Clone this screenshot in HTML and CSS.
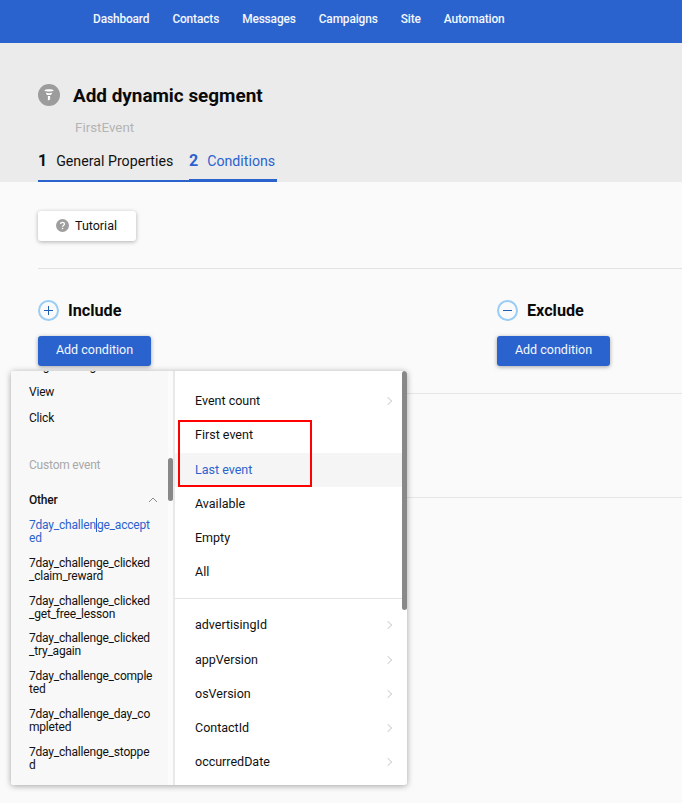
FILE: index.html
```html
<!DOCTYPE html>
<html lang="en">
<head>
  <meta charset="UTF-8" />
  <title>Add dynamic segment</title>
  <link rel="stylesheet" href="styles.css">
</head>
<body>
  <nav class="topbar">
    <a>Dashboard</a>
    <a>Contacts</a>
    <a>Messages</a>
    <a>Campaigns</a>
    <a>Site</a>
    <a>Automation</a>
  </nav>

  <header class="page-head">
    <div class="title-row">
      <span class="title-icon">
        <svg width="10" height="12" viewBox="0 0 10 12"><path d="M0.3 1.4C2 0 8 0 9.7 1.4 8 2.8 2 2.8 0.3 1.4z" fill="#fff"/><path d="M1.6 3.6c2 .7 4.8 .7 6.8 0L7 6H3z" fill="#fff"/><path d="M3.9 7h2.2v3.4l-2.2 1z" fill="#fff"/></svg>
      </span>
      <h1>Add dynamic segment</h1>
    </div>
    <p class="subtitle">FirstEvent</p>
    <div class="steps">
      <div class="step done"><b>1</b><span>General Properties</span></div>
      <div class="step active"><b>2</b><span>Conditions</span></div>
    </div>
  </header>

  <main class="content">
    <button class="tutorial-btn">
      <svg width="13" height="13" viewBox="0 0 13 13"><circle cx="6.5" cy="6.5" r="6.5" fill="#9e9e9e"/><path d="M4.6 5.1c0-1 .8-1.7 1.9-1.7s1.9.7 1.9 1.6c0 1.4-1.9 1.4-1.9 2.8" fill="none" stroke="#fff" stroke-width="1.3"/><rect x="5.8" y="8.8" width="1.4" height="1.4" fill="#fff"/></svg>
      Tutorial
    </button>

    <div class="conditions">
      <section class="cond-col">
        <div class="cond-head">
          <span class="round-icon"><svg width="9" height="9" viewBox="0 0 9 9"><path d="M4.5 0v9M0 4.5h9" stroke="#1d5fb5" stroke-width="1"/></svg></span>
          <h2>Include</h2>
        </div>
        <button class="add-btn">Add condition</button>
      </section>
      <section class="cond-col">
        <div class="cond-head">
          <span class="round-icon"><svg width="9" height="9" viewBox="0 0 9 9"><path d="M0 4.5h9" stroke="#1d5fb5" stroke-width="1"/></svg></span>
          <h2>Exclude</h2>
        </div>
        <button class="add-btn">Add condition</button>
      </section>
    </div>
    <div class="row-line first"></div>
    <div class="row-line second"></div>
  </main>

  <div class="menu">
    <div class="menu-left">
      <ul class="events">
        <li class="clipped">Page loading</li>
        <li class="plain">View</li>
        <li class="plain">Click</li>
        <li class="group-label">Custom event</li>
        <li class="group-head">Other
          <svg width="10" height="6" viewBox="0 0 10 6"><path d="M1 5l4-4 4 4" fill="none" stroke="#8a8a8a"/></svg>
        </li>
        <li class="event current">7day_challen<i class="caret"></i>ge_accept<br>ed</li>
        <li class="event">7day_challenge_clicked<br>_claim_reward</li>
        <li class="event">7day_challenge_clicked<br>_get_free_lesson</li>
        <li class="event">7day_challenge_clicked<br>_try_again</li>
        <li class="event">7day_challenge_comple<br>ted</li>
        <li class="event">7day_challenge_day_co<br>mpleted</li>
        <li class="event">7day_challenge_stoppe<br>d</li>
      </ul>
      <div class="scroll left-thumb"></div>
    </div>
    <div class="menu-right">
      <ul class="ops">
        <li class="arrow">Event count</li>
        <li>First event</li>
        <li class="hover">Last event</li>
        <li>Available</li>
        <li>Empty</li>
        <li>All</li>
      </ul>
      <ul class="ops attrs">
        <li class="arrow">advertisingId</li>
        <li class="arrow">appVersion</li>
        <li class="arrow">osVersion</li>
        <li class="arrow">ContactId</li>
        <li class="arrow">occurredDate</li>
      </ul>
      <div class="scroll right-thumb"></div>
    </div>
  </div>
  <div class="red-box"></div>
</body>
</html>
```

FILE: styles.css
```css
* {
  box-sizing: border-box;
}

body {
  margin: 0;
  height: 803px;
  overflow: hidden;
  position: relative;
  font-family: Roboto, "Liberation Sans", sans-serif;
  background: #fafafa;
  color: #111;
}

.topbar {
  height: 43px;
  background: #2b63ce;
  padding: 12px 0 0 93px;
  display: flex;
  gap: 23px;
  font-size: 11.9px;
  font-weight: 500;
  letter-spacing: -0.13px;
  line-height: 14px;
  color: #f4f7fd;
}

.page-head {
  height: 139px;
  background: #ebebeb;
  padding: 40px 0 0 38px;
}

.title-row {
  display: flex;
  align-items: center;
  gap: 13px;
  height: 24px;
}

.title-icon {
  width: 22px;
  height: 22px;
  border-radius: 50%;
  background: #9c9c9c;
  display: flex;
  align-items: center;
  justify-content: center;
}

h1 {
  margin: 0;
  font-size: 18.9px;
  font-weight: 700;
  color: #0a0a0a;
}

.subtitle {
  margin: 13px 0 0 37px;
  font-size: 13.4px;
  line-height: 16px;
  color: #b4b4b4;
}

.steps {
  display: flex;
  margin-top: 15px;
}

.step {
  height: 31px;
  display: flex;
  align-items: flex-start;
  gap: 9px;
  font-size: 14.2px;
  line-height: 20px;
  border-bottom: 2px solid #2b63ce;
}

.step b {
  font-size: 16px;
  font-weight: 700;
}

.step.done {
  width: 151px;
}

.step.active {
  width: 88px;
  border-bottom-width: 3px;
  color: #2b63ce;
}

.content {
  padding: 29px 0 0 38px;
  position: relative;
}

.tutorial-btn {
  width: 98px;
  height: 30px;
  border: none;
  border-radius: 3px;
  background: #fff;
  box-shadow: 0 1px 4px rgba(0, 0, 0, 0.3);
  display: flex;
  align-items: center;
  gap: 6px;
  padding: 0 0 2px 18px;
  font: 12.5px Roboto, sans-serif;
  color: #111;
}

.conditions {
  display: grid;
  grid-template-columns: 459px 1fr;
  margin-top: 27px;
  border-top: 1px solid #e2e2e2;
  padding-top: 30px;
}

.cond-head {
  display: flex;
  align-items: center;
  gap: 9px;
  height: 22px;
}

.round-icon {
  width: 21px;
  height: 21px;
  border: 2px solid #9acdf5;
  border-radius: 50%;
  display: flex;
  align-items: center;
  justify-content: center;
}

h2 {
  margin: 0;
  font-size: 16.2px;
  font-weight: 700;
  color: #0a0a0a;
}

.add-btn {
  display: block;
  margin-top: 15px;
  width: 113px;
  height: 30px;
  border: none;
  border-radius: 3px;
  background: #2b63ce;
  box-shadow: 0 1px 4px rgba(0, 0, 0, 0.35);
  padding: 0 0 4px;
  font: 12.5px Roboto, sans-serif;
  color: #f4f7fd;
}

.row-line {
  height: 1px;
  background: #e6e6e6;
}

.row-line.first {
  margin-top: 27px;
}

.row-line.second {
  margin-top: 103px;
}

/* dropdown over the page */
.menu {
  position: absolute;
  left: 11px;
  top: 371px;
  width: 396px;
  height: 414px;
  display: flex;
  background: #fff;
  border-radius: 3px;
  box-shadow: 0 1px 6px rgba(0, 0, 0, 0.35);
  overflow: hidden;
}

.menu-left {
  width: 163px;
  position: relative;
  background: #fbfbfb;
  border-right: 1px solid #e8e8e8;
  overflow: hidden;
}

.events {
  list-style: none;
  width: 157px;
  min-height: 430px;
  margin: -12px 0 0;
  padding: 0 0 0 18px;
  background: #f8f8f8;
  font-size: 12px;
  letter-spacing: -0.2px;
}

.events .clipped {
  line-height: 14px;
}

.events .plain {
  line-height: 14px;
  margin-top: 12px;
}

.events .group-label {
  line-height: 14px;
  margin-top: 33px;
  color: #a8a8a8;
}

.events .group-head {
  line-height: 14px;
  margin-top: 21px;
  width: 129px;
  display: flex;
  align-items: center;
  justify-content: space-between;
  font-weight: 500;
}

.event {
  line-height: 13px;
  margin-top: 12px;
  height: 25.8px;
  white-space: nowrap;
}

.event.current {
  margin-top: 11px;
  height: 26.8px;
  color: #2b63ce;
}

.caret {
  display: inline-block;
  width: 1px;
  height: 14px;
  margin-bottom: -3px;
  background: #2b63ce;
}

.scroll {
  position: absolute;
  width: 5px;
  border-radius: 3px;
  background: #888;
}

.left-thumb {
  right: 0;
  top: 87px;
  height: 43px;
}

.menu-right {
  flex: 1;
  position: relative;
  border-left: 1px solid #e8e8e8;
}

.ops {
  list-style: none;
  margin: 0;
  padding: 13.2px 0 9px;
  font-size: 12.5px;
  border-bottom: 1px solid #e4e4e4;
}

.ops li {
  height: 34.2px;
  line-height: 34.2px;
  padding-left: 20px;
  position: relative;
}

.ops li.hover {
  background: #f5f5f5;
  color: #2b63ce;
}

.ops li.arrow::after {
  content: "";
  position: absolute;
  right: 16px;
  top: 14px;
  width: 5px;
  height: 5px;
  border-top: 1px solid #d4d4d4;
  border-right: 1px solid #d4d4d4;
  transform: rotate(45deg);
}

.attrs {
  border-bottom: none;
  padding-top: 9px;
}

.right-thumb {
  right: 0;
  top: 0;
  height: 239px;
}

.red-box {
  position: absolute;
  left: 178px;
  top: 420px;
  width: 134px;
  height: 67px;
  border: 2px solid #f00;
}
```
